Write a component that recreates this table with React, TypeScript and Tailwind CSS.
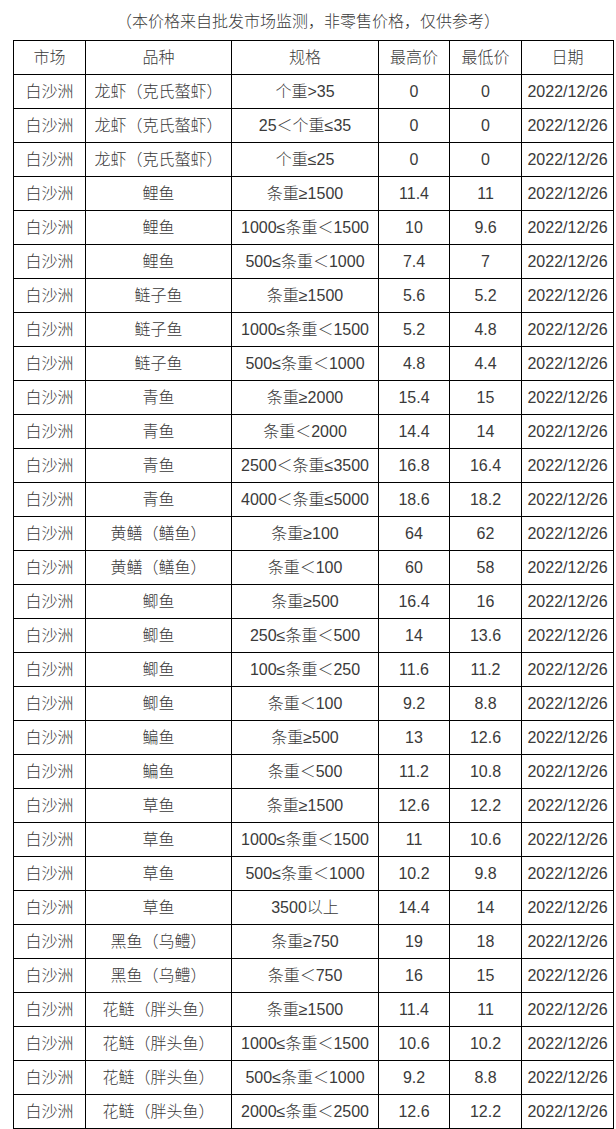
const rows: [string, string, string, string][] = [
  ["龙虾（克氏螯虾）", "个重>35", "0", "0"],
  ["龙虾（克氏螯虾）", "25＜个重≤35", "0", "0"],
  ["龙虾（克氏螯虾）", "个重≤25", "0", "0"],
  ["鲤鱼", "条重≥1500", "11.4", "11"],
  ["鲤鱼", "1000≤条重＜1500", "10", "9.6"],
  ["鲤鱼", "500≤条重＜1000", "7.4", "7"],
  ["鲢子鱼", "条重≥1500", "5.6", "5.2"],
  ["鲢子鱼", "1000≤条重＜1500", "5.2", "4.8"],
  ["鲢子鱼", "500≤条重＜1000", "4.8", "4.4"],
  ["青鱼", "条重≥2000", "15.4", "15"],
  ["青鱼", "条重＜2000", "14.4", "14"],
  ["青鱼", "2500＜条重≤3500", "16.8", "16.4"],
  ["青鱼", "4000＜条重≤5000", "18.6", "18.2"],
  ["黄鳝（鳝鱼）", "条重≥100", "64", "62"],
  ["黄鳝（鳝鱼）", "条重＜100", "60", "58"],
  ["鲫鱼", "条重≥500", "16.4", "16"],
  ["鲫鱼", "250≤条重＜500", "14", "13.6"],
  ["鲫鱼", "100≤条重＜250", "11.6", "11.2"],
  ["鲫鱼", "条重＜100", "9.2", "8.8"],
  ["鳊鱼", "条重≥500", "13", "12.6"],
  ["鳊鱼", "条重＜500", "11.2", "10.8"],
  ["草鱼", "条重≥1500", "12.6", "12.2"],
  ["草鱼", "1000≤条重＜1500", "11", "10.6"],
  ["草鱼", "500≤条重＜1000", "10.2", "9.8"],
  ["草鱼", "3500以上", "14.4", "14"],
  ["黑鱼（乌鳢）", "条重≥750", "19", "18"],
  ["黑鱼（乌鳢）", "条重＜750", "16", "15"],
  ["花鲢（胖头鱼）", "条重≥1500", "11.4", "11"],
  ["花鲢（胖头鱼）", "1000≤条重＜1500", "10.6", "10.2"],
  ["花鲢（胖头鱼）", "500≤条重＜1000", "9.2", "8.8"],
  ["花鲢（胖头鱼）", "2000≤条重＜2500", "12.6", "12.2"],
];

const cell = "border border-black h-[34px] p-0 text-center align-middle";

export default function App() {
  return (
    <div className="w-[616px] bg-white text-[#3a3a3a] text-[16px] font-light font-['Liberation_Sans','Noto_Sans_CJK_SC',sans-serif]">
      <p className="pt-[10px] pb-[6px] leading-[24px] text-center">（本价格来自批发市场监测，非零售价格，仅供参考）</p>
      <table className="ml-[13px] w-[600px] table-fixed border-collapse">
        <colgroup>
          <col className="w-[72px]" />
          <col className="w-[146px]" />
          <col className="w-[147px]" />
          <col className="w-[71px]" />
          <col className="w-[72px]" />
          <col className="w-[92px]" />
        </colgroup>
        <thead>
          <tr>
            <td className={cell}>市场</td>
            <td className={cell}>品种</td>
            <td className={cell}>规格</td>
            <td className={cell}>最高价</td>
            <td className={cell}>最低价</td>
            <td className={cell}>日期</td>
          </tr>
        </thead>
        <tbody>
          {rows.map((r, i) => (
            <tr key={i}>
              <td className={cell}>白沙洲</td>
              <td className={cell}>{r[0]}</td>
              <td className={cell}>{r[1]}</td>
              <td className={cell}>{r[2]}</td>
              <td className={cell}>{r[3]}</td>
              <td className={cell}>2022/12/26</td>
            </tr>
          ))}
        </tbody>
      </table>
    </div>
  );
}
